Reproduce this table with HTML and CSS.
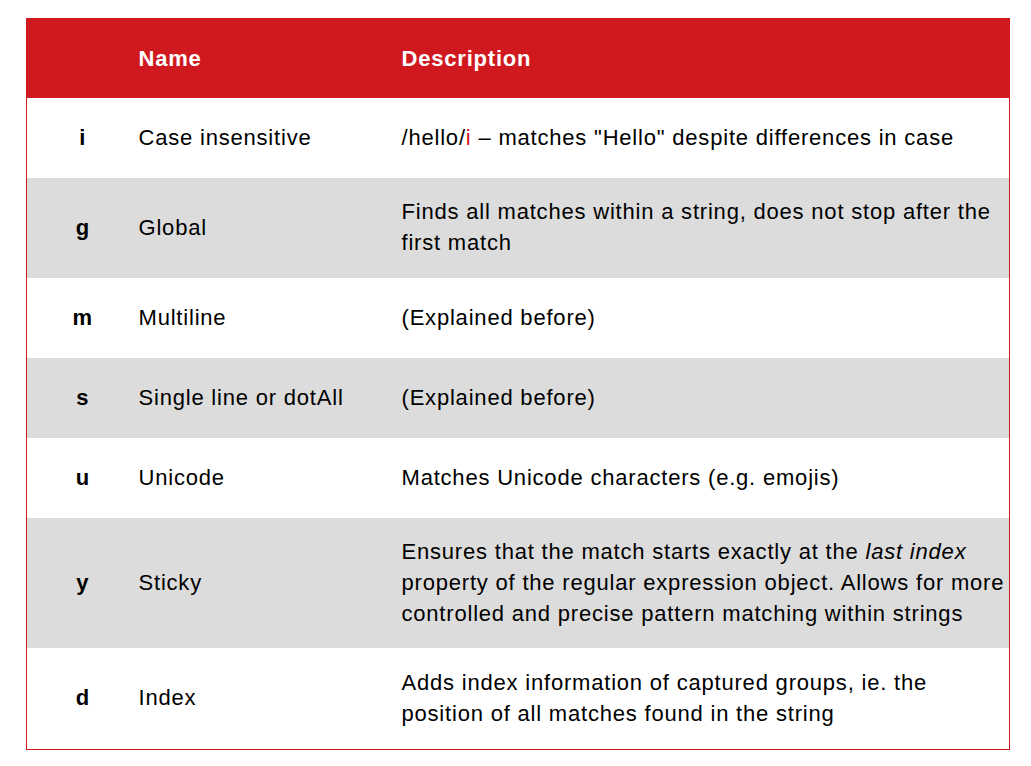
FILE: index.html
```html
<!DOCTYPE html>
<html>
<head>
<meta charset="utf-8">
<link rel="stylesheet" href="styles.css">
</head>
<body>
<table class="flags">
  <thead>
    <tr><th class="c-flag"></th><th class="c-name">Name</th><th class="c-desc">Description</th></tr>
  </thead>
  <tbody>
    <tr><td class="c-flag">i</td><td class="c-name">Case insensitive</td><td class="c-desc">/hello/<span class="hl">i</span> – matches "Hello" despite differences in case</td></tr>
    <tr class="alt two"><td class="c-flag">g</td><td class="c-name">Global</td><td class="c-desc">Finds all matches within a string, does not stop after the first match</td></tr>
    <tr><td class="c-flag">m</td><td class="c-name">Multiline</td><td class="c-desc">(Explained before)</td></tr>
    <tr class="alt"><td class="c-flag">s</td><td class="c-name">Single line or dotAll</td><td class="c-desc">(Explained before)</td></tr>
    <tr><td class="c-flag">u</td><td class="c-name">Unicode</td><td class="c-desc">Matches Unicode characters (e.g. emojis)</td></tr>
    <tr class="alt"><td class="c-flag">y</td><td class="c-name">Sticky</td><td class="c-desc">Ensures that the match starts exactly at the <em>last index</em> property of the regular expression object. Allows for more controlled and precise pattern matching within strings</td></tr>
    <tr class="two last"><td class="c-flag">d</td><td class="c-name">Index</td><td class="c-desc">Adds index information of captured groups, ie. the position of all matches found in the string</td></tr>
  </tbody>
</table>
</body>
</html>
```

FILE: styles.css
```css
html, body {
  margin: 0;
  background: #ffffff;
}
body {
  padding: 18px 0 0 26px;
  font-family: "Liberation Sans", Arial, sans-serif;
  font-size: 22px;
  letter-spacing: 0.8px;
  color: #000;
}
.flags {
  width: 984px;
  border-collapse: collapse;
  border: 1px solid #d0191f;
  table-layout: fixed;
}
.flags th {
  background: #d0191f;
  color: #fff;
  font-weight: bold;
  text-align: left;
  height: 79px;
  padding: 0;
  line-height: 31px;
  box-sizing: border-box;
}
.flags td {
  height: 80px;
  padding: 18px 0 19px 0;
  line-height: 31px;
  vertical-align: middle;
  box-sizing: border-box;
}
.flags tr.two td {
  height: 100px;
}
.flags tr.last td {
  height: 102px;
}
.flags tr.alt td {
  background: #dcdcdc;
}
.c-flag {
  width: 112px;
  text-align: center;
  font-weight: bold;
}
.c-name {
  width: 263px;
}
.c-desc {
  padding-right: 2px !important;
}
.hl {
  color: #d0191f;
}
em {
  font-style: italic;
}
```
